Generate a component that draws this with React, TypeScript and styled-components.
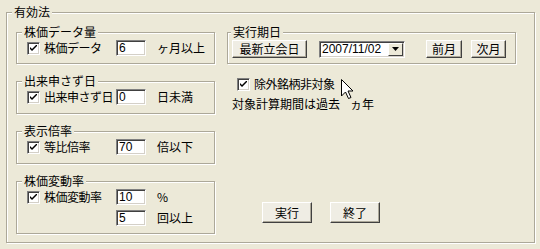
import React from 'react';
import styled, { createGlobalStyle } from 'styled-components';

const GlobalStyle = createGlobalStyle`
  html, body {
    margin: 0;
    padding: 0;
    background: #ece9d8;
  }
  body {
    font-family: "Noto Sans CJK JP", "Noto Sans", sans-serif;
    font-size: 12px;
    color: #000;
  }
`;

const Page = styled.div`
  position: relative;
  width: 540px;
  height: 249px;
  padding-top: 5px;
  box-sizing: border-box;
  overflow: hidden;
`;

const Group = styled.fieldset<{ $height?: number }>`
  margin: 0;
  padding: 0;
  min-width: 0;
  border: 1px solid #aca899;
  box-shadow: inset 1px 1px 0 #fff, 1px 1px 0 #fff;
  box-sizing: border-box;
  ${(p) => (p.$height ? `height: ${p.$height}px;` : '')}
`;

const Legend = styled.legend<{ $indent?: number }>`
  margin-left: ${(p) => p.$indent ?? 5}px;
  padding: 0 2px;
  line-height: 14px;
  background: #ece9d8;
`;

const Frame = styled(Group)`
  margin: 0 5px 0 6px;
`;

const Columns = styled.div`
  display: flex;
  gap: 12px;
  padding: 6px 0 0 9px;
`;

const LeftColumn = styled.div`
  display: flex;
  flex-direction: column;
  gap: 10px;
  width: 199px;
`;

const RightColumn = styled.div`
  display: flex;
  flex-direction: column;
  width: 289px;
`;

const Body = styled.div<{ $pl?: number; $pb?: number }>`
  padding: 1px 0 ${(p) => p.$pb ?? 7}px ${(p) => p.$pl ?? 10}px;
`;

const FieldGrid = styled.div`
  display: grid;
  grid-template-columns: 89px 30px auto;
  grid-auto-rows: 16px;
  row-gap: 5px;
  align-items: center;
`;

const CheckLabel = styled.label`
  display: flex;
  align-items: center;
  gap: 4px;
  line-height: 14px;
  letter-spacing: -0.5px;
  white-space: nowrap;
`;

const Box = styled.span`
  display: inline-flex;
  align-items: center;
  justify-content: center;
  width: 13px;
  height: 13px;
  box-sizing: border-box;
  background: #fff;
  border: 1px solid;
  border-color: #808080 #fff #fff #808080;
  box-shadow: inset 1px 1px 0 #404040, inset -1px -1px 0 #d4d0c8;
  flex: none;
`;

const TextBox = styled.span<{ $col?: number }>`
  grid-column: ${(p) => p.$col ?? 2};
  display: flex;
  align-items: center;
  width: 30px;
  height: 16px;
  box-sizing: border-box;
  padding-left: 2px;
  background: #fff;
  border: 1px solid;
  border-color: #808080 #fff #fff #808080;
  box-shadow: inset 1px 1px 0 #404040, inset -1px -1px 0 #d4d0c8;
  font-family: "Liberation Sans", Arial, sans-serif;
  font-size: 12px;
  line-height: 14px;
`;

const Suffix = styled.span`
  grid-column: 3;
  margin-left: 11px;
  line-height: 14px;
  white-space: nowrap;
`;

const Toolbar = styled.div`
  display: flex;
  align-items: center;
`;

const Button = styled.button<{ $w: number; $h?: number; $ml?: number }>`
  width: ${(p) => p.$w}px;
  height: ${(p) => p.$h ?? 18}px;
  margin: 0 0 0 ${(p) => p.$ml ?? 0}px;
  padding: 0;
  font: inherit;
  line-height: 14px;
  color: #000;
  background: #efede4;
  border: 1px solid;
  border-color: #fff #404040 #404040 #fff;
  box-shadow: inset -1px -1px 0 #aca899;
  box-sizing: border-box;
`;

const Combo = styled.div`
  display: flex;
  align-items: center;
  width: 86px;
  height: 17px;
  margin-left: 12px;
  box-sizing: border-box;
  background: #fff;
  border: 1px solid;
  border-color: #808080 #fff #fff #808080;
  box-shadow: inset 1px 1px 0 #404040, inset -1px -1px 0 #d4d0c8;
  padding: 1px 1px 1px 2px;
`;

const ComboText = styled.span`
  flex: 1;
  font-family: "Liberation Sans", Arial, sans-serif;
  font-size: 12px;
  line-height: 13px;
`;

const DropButton = styled.span`
  display: flex;
  align-items: center;
  justify-content: center;
  width: 15px;
  height: 13px;
  box-sizing: border-box;
  background: #ece9d8;
  border: 1px solid;
  border-color: #fff #404040 #404040 #fff;
`;

const OptionRow = styled.div<{ $mt: number; $ml: number }>`
  display: flex;
  align-items: center;
  margin: ${(p) => p.$mt}px 0 0 ${(p) => p.$ml}px;
  line-height: 14px;
  white-space: nowrap;
`;

const Small = styled.span`
  margin-left: 10px;
`;

const Actions = styled.div`
  display: flex;
  gap: 18px;
  margin: 91px 0 0 35px;
`;

const Pointer = styled.svg`
  position: absolute;
  left: 341px;
  top: 79px;
`;

const Check = () => (
  <Box>
    <svg width="7" height="7" viewBox="0 0 7 7">
      <path d="M0 2 L0 4 L2 6 L7 1 L7 -1 L2 4 Z" fill="#000" />
    </svg>
  </Box>
);

const App = () => (
  <Page>
    <GlobalStyle />
    <Frame $height={238}>
      <Legend>有効法</Legend>
      <Columns>
        <LeftColumn>
          <Group>
            <Legend>株価データ量</Legend>
            <Body $pb={7}>
              <FieldGrid>
                <CheckLabel>
                  <Check />
                  株価データ
                </CheckLabel>
                <TextBox>6</TextBox>
                <Suffix>ヶ月以上</Suffix>
              </FieldGrid>
            </Body>
          </Group>
          <Group>
            <Legend>出来申さず日</Legend>
            <Body $pb={8}>
              <FieldGrid>
                <CheckLabel>
                  <Check />
                  出来申さず日
                </CheckLabel>
                <TextBox>0</TextBox>
                <Suffix>日未満</Suffix>
              </FieldGrid>
            </Body>
          </Group>
          <Group>
            <Legend>表示倍率</Legend>
            <Body $pb={8}>
              <FieldGrid>
                <CheckLabel>
                  <Check />
                  等比倍率
                </CheckLabel>
                <TextBox>70</TextBox>
                <Suffix>倍以下</Suffix>
              </FieldGrid>
            </Body>
          </Group>
          <Group>
            <Legend>株価変動率</Legend>
            <Body $pb={7}>
              <FieldGrid>
                <CheckLabel>
                  <Check />
                  株価変動率
                </CheckLabel>
                <TextBox>10</TextBox>
                <Suffix>%</Suffix>
                <TextBox $col={2}>5</TextBox>
                <Suffix>回以上</Suffix>
              </FieldGrid>
            </Body>
          </Group>
        </LeftColumn>
        <RightColumn>
          <Group>
            <Legend $indent={3}>実行期日</Legend>
            <Body $pl={4} $pb={5}>
              <Toolbar>
                <Button $w={75}>最新立会日</Button>
                <Combo>
                  <ComboText>2007/11/02</ComboText>
                  <DropButton>
                    <svg width="7" height="4" viewBox="0 0 7 4">
                      <path d="M0 0 H7 L3.5 4 Z" fill="#000" />
                    </svg>
                  </DropButton>
                </Combo>
                <Button $w={36} $ml={21}>前月</Button>
                <Button $w={35} $ml={9}>次月</Button>
              </Toolbar>
            </Body>
          </Group>
          <OptionRow $mt={13} $ml={10}>
            <CheckLabel>
              <Check />
              除外銘柄非対象
            </CheckLabel>
          </OptionRow>
          <OptionRow $mt={6} $ml={5}>
            対象計算期間は過去<Small>ヵ年</Small>
          </OptionRow>
          <Actions>
            <Button $w={50} $h={21}>実行</Button>
            <Button $w={50} $h={21}>終了</Button>
          </Actions>
        </RightColumn>
      </Columns>
    </Frame>
    <Pointer width="13" height="21" viewBox="0 0 13 21">
      <path
        d="M0.5 0.5 V17 L4.5 13 L7.5 19.5 L10 18.5 L7 12 H12 Z"
        fill="#fff"
        stroke="#000"
        strokeWidth="1"
        strokeLinejoin="miter"
      />
    </Pointer>
  </Page>
);

export default App;
